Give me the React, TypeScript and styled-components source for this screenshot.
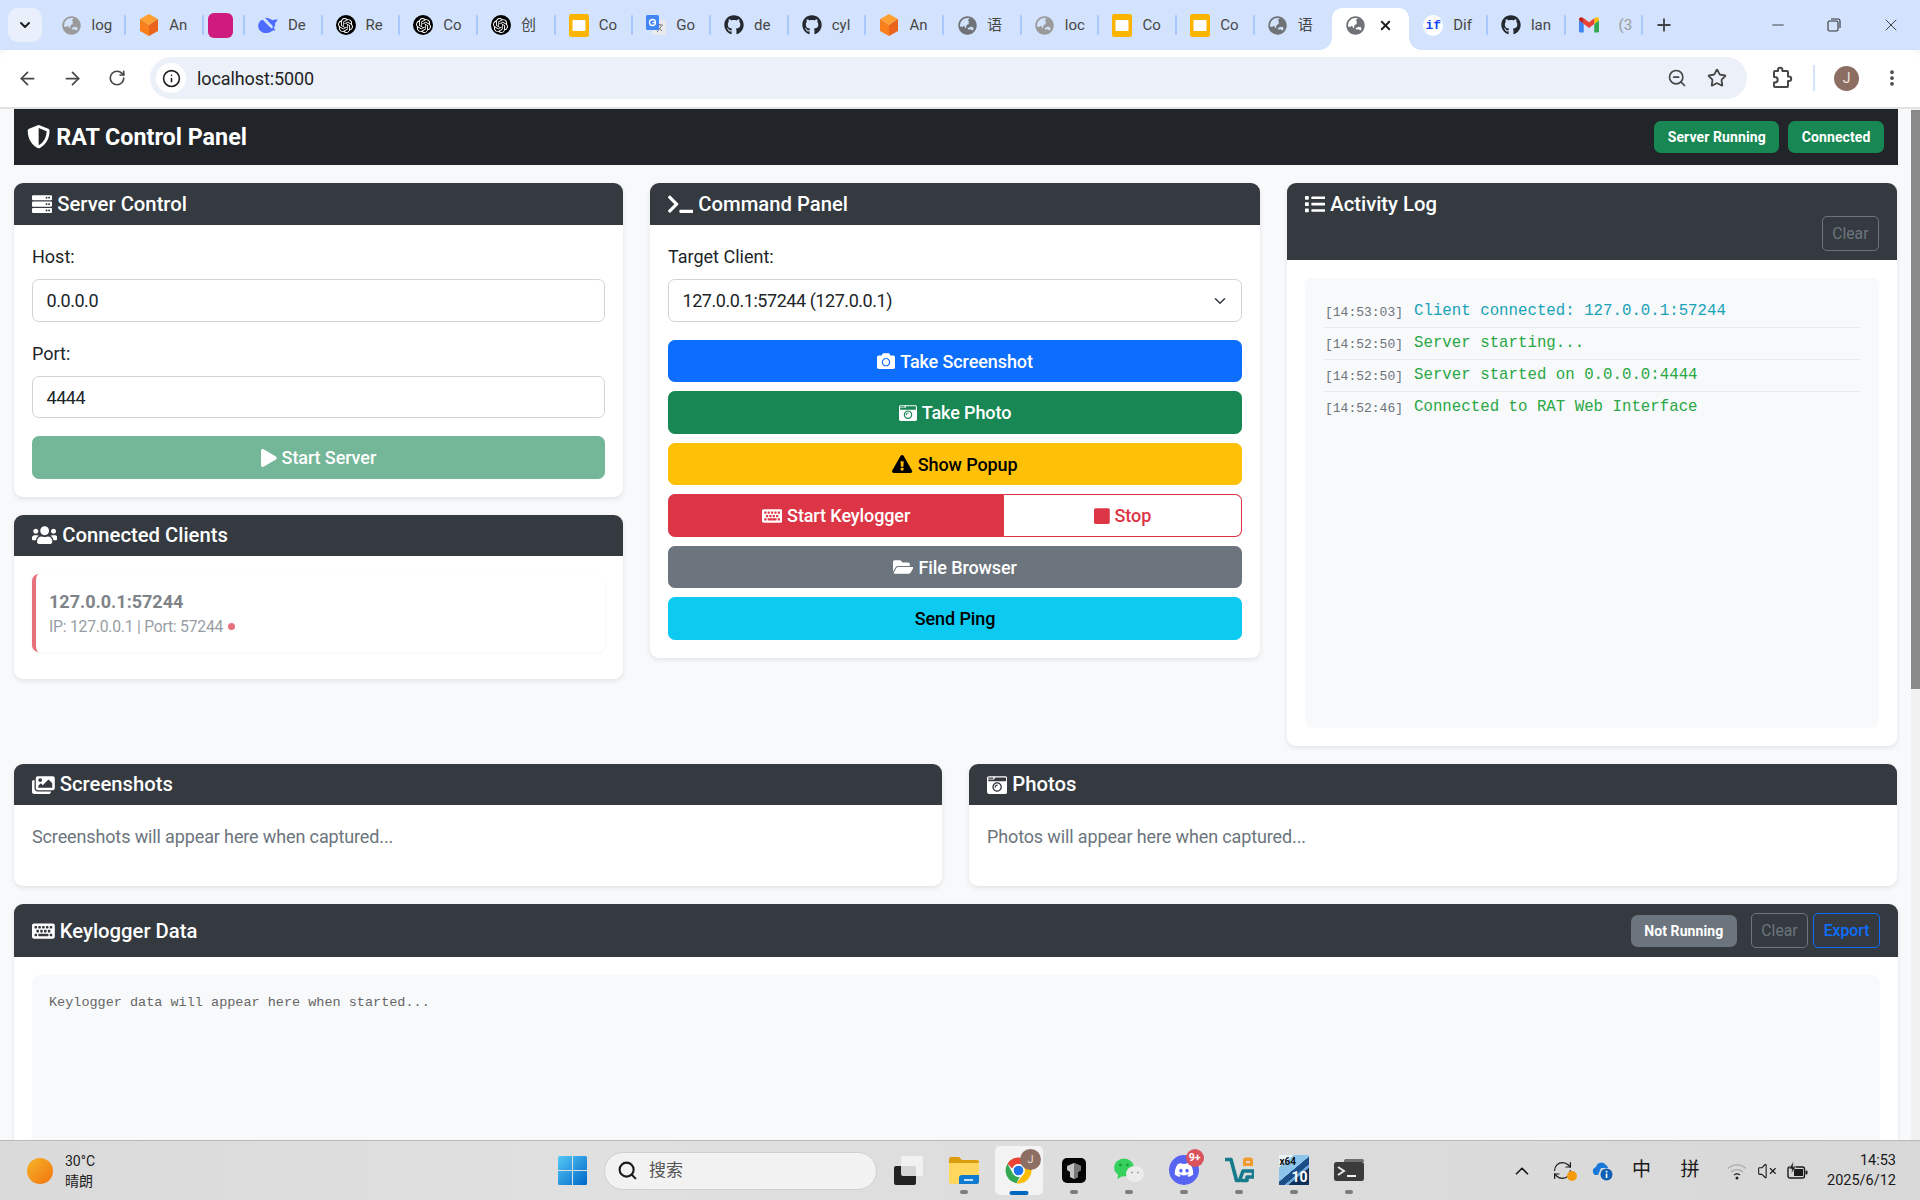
import React from 'react';
import styled, { createGlobalStyle } from 'styled-components';
import {
  FaServer, FaUsers, FaTerminal, FaList, FaImages, FaCameraRetro, FaCamera, FaExclamationTriangle,
  FaKeyboard, FaStop, FaFolderOpen, FaPlay, FaShieldAlt, FaGithub, FaGlobeAsia, FaDiscord,
} from 'react-icons/fa';
import { SiOpenai } from 'react-icons/si';
import {
  ArrowLeft, ArrowRight, RotateCw, ZoomOut, Star, EllipsisVertical, Info, Plus, X, Minus,
  ChevronDown, ChevronUp, Search, VolumeX, RefreshCw,
} from 'lucide-react';

const UI = `Roboto, "Noto Sans CJK SC", sans-serif`;
const MONO = `"Liberation Mono", monospace`;

const Global = createGlobalStyle`
  html, body { margin: 0; padding: 0; height: 100%; overflow: hidden; }
  body { font-family: ${UI}; font-size: 18px; line-height: 1.5; color: #212529; background: #f8f9fa; }
  * { box-sizing: border-box; }
`;

const Screen = styled.div`
  width: 1920px; height: 1200px; display: flex; flex-direction: column; overflow: hidden;
`;

/* Font Awesome glyphs keep their real proportions: 1em tall, width from the glyph's viewBox */
const UsersGlyph = styled(FaUsers)`width: 1.25em; height: 1em; flex: none;`;
const TerminalGlyph = styled(FaTerminal)`width: 1.25em; height: 1em; flex: none;`;
const ImagesGlyph = styled(FaImages)`width: 1.125em; height: 1em; flex: none;`;
const WarningGlyph = styled(FaExclamationTriangle)`width: 1.125em; height: 1em; flex: none;`;
const KeyboardGlyph = styled(FaKeyboard)`width: 1.125em; height: 1em; flex: none;`;
const FolderGlyph = styled(FaFolderOpen)`width: 1.125em; height: 1em; flex: none;`;
const PlayGlyph = styled(FaPlay)`width: .875em; height: 1em; flex: none;`;
const StopGlyph = styled(FaStop)`width: .875em; height: 1em; flex: none;`;

/* ---------- browser chrome ---------- */
const TabStrip = styled.div`
  height: 50px; flex: none; background: #d3e3fd; display: flex; align-items: flex-start; padding-left: 8px;
`;
const TabSearch = styled.div`
  width: 34px; height: 34px; margin-top: 8px; margin-right: 5.5px; border-radius: 10px; background: #e9f0fc;
  display: flex; align-items: center; justify-content: center; color: #1f1f1f; flex: none;
`;
const Tab = styled.div<{ $w?: number; $active?: boolean; $noSep?: boolean }>`
  position: relative; flex: none; width: ${p => p.$w ?? 77.7}px; height: ${p => (p.$active ? 42 : 34)}px; margin-top: 8px;
  display: flex; align-items: center; padding-left: ${p => (p.$w ? 8 : 14)}px; padding-bottom: ${p => (p.$active ? 8 : 0)}px;
  background: ${p => (p.$active ? '#fff' : 'transparent')};
  border-radius: 10px 10px 0 0;
  &::after {
    content: ''; position: absolute; right: -1px; top: 7px; width: 2px; height: 20px; border-radius: 1px;
    background: ${p => (p.$active || p.$noSep ? 'transparent' : '#a8c7fa')};
  }
  ${p => p.$active && `
    &::before {
      content: ''; position: absolute; left: -12px; right: -12px; bottom: 0; height: 12px; z-index: 0;
      background:
        radial-gradient(circle at 0 0, transparent 11.5px, #fff 12px) left bottom / 12px 12px no-repeat,
        radial-gradient(circle at 100% 0, transparent 11.5px, #fff 12px) right bottom / 12px 12px no-repeat;
    }
  `}
`;
const Favicon = styled.span<{ $c?: string }>`
  width: 20px; height: 20px; flex: none; display: flex; align-items: center; justify-content: center;
  color: ${p => p.$c ?? '#757575'}; font-size: 20px; position: relative; z-index: 1;
`;
const TabLabel = styled.span<{ $faint?: boolean }>`
  margin-left: ${p => (p.$faint ? 20 : 10)}px; white-space: nowrap; font-size: 15px; line-height: 20px;
  color: ${p => (p.$faint ? '#9a9a9a' : '#474747')}; flex: none;
`;
const TabClose = styled.span`
  margin-left: 12px; display: flex; color: #1f1f1f; position: relative; z-index: 1;
`;
const Swatch = styled.span`
  width: 25px; height: 25px; border-radius: 6px; background: #cf1b7f; flex: none; display: block;
`;
const OpenAiDisc = styled.span`
  width: 20px; height: 20px; border-radius: 50%; background: #000; color: #fff; display: flex; align-items: center; justify-content: center; font-size: 15px;
`;
const DifyDisc = styled.span`
  width: 21px; height: 21px; border-radius: 50%; background: #fff; color: #1346f2; font: 700 13px/21px ${MONO}; text-align: center; display: block;
`;
const NewTab = styled.div`
  margin-left: 8px; margin-top: 14px; width: 28px; height: 22px; display: flex; align-items: center; justify-content: center; color: #444;
`;
const WindowButtons = styled.div`
  margin-left: auto; display: flex; align-items: center; height: 50px; color: #333;
`;
const WinBtn = styled.span<{ $w: number }>`
  width: ${p => p.$w}px; display: flex; justify-content: center; align-items: center;
`;

const Toolbar = styled.div`
  height: 59px; flex: none; background: #fff; border-radius: 10px 10px 0 0; border-bottom: 2px solid #e3e3e3;
  display: flex; align-items: center; padding-left: 4.5px; padding-bottom: 1px;
`;
const ToolBtn = styled.span<{ $w?: number }>`
  width: ${p => p.$w ?? 45}px; height: 42px; flex: none; display: flex; align-items: center; justify-content: center; color: #474747;
`;
const Omnibox = styled.div`
  flex: none; width: 1597px; height: 42px; margin: 0 11px 0 10.5px; border-radius: 21px; background: #ebf0f9;
  display: flex; align-items: center; padding-left: 6px; padding-right: 10px;
`;
const SiteInfo = styled.span`
  width: 30px; height: 30px; border-radius: 50%; background: #fff; color: #1f1f1f; display: flex; align-items: center; justify-content: center; flex: none;
`;
const Url = styled.span`
  margin-left: 11px; font-size: 18px; color: #1f1f1f; flex: 1; letter-spacing: -0.1px;
`;
const ToolDivider = styled.span`
  width: 2px; height: 26px; margin: 0 9px 0 10px; background: #d3e3fd; flex: none;
`;
const Avatar = styled.span`
  width: 25px; height: 25px; border-radius: 50%; background: #8d6e63; color: #f0e5e0; font-size: 14px; display: flex; align-items: center; justify-content: center;
`;

/* ---------- page ---------- */
const Viewport = styled.div`
  flex: 1; min-height: 0; display: flex;
`;
const Page = styled.main`
  flex: 1; min-width: 0; padding: 0 13px 0 14px; overflow: hidden; background: #f8f9fa;
`;
const Scrollbar = styled.div`
  width: 9px; flex: none; background: #f1f1f1;
`;
const ScrollThumb = styled.div`
  height: 579px; margin-top: 1px; background: #8a8a8a;
`;
const Navbar = styled.header`
  height: 56px; background: #212529; display: flex; align-items: center; justify-content: space-between; padding: 0 14px 0 13px; margin-bottom: 18px;
`;
const Brand = styled.h1`
  margin: 0; font-size: 23.3px; line-height: 27px; font-weight: 700; color: #fff; display: flex; align-items: center; gap: 6px;
`;
const Badges = styled.div`
  display: flex; gap: 9px;
`;
const Badge = styled.span<{ $bg: string }>`
  height: 32px; padding: 0 13.5px; border-radius: 6.75px; background: ${p => p.$bg}; color: #fff; font-size: 14px; font-weight: 700; line-height: 32px; white-space: nowrap; letter-spacing: .1px;
`;
const TopRow = styled.div`
  display: grid; grid-template-columns: 609px 610px 610px; column-gap: 27px; margin-bottom: 17.7px; align-items: start;
`;
const Column = styled.div`
  display: flex; flex-direction: column; gap: 18px;
`;
const MidRow = styled.div`
  display: grid; grid-template-columns: 928px 928px; column-gap: 27px; margin-bottom: 18px;
`;
const Card = styled.section`
  background: #fff; border-radius: 9px; box-shadow: 0 2px 5px rgba(0,0,0,.09); overflow: hidden;
`;
const CardHeader = styled.div<{ $stack?: boolean; $slim?: boolean }>`
  background: #343a40; color: #fff; padding: ${p => (p.$slim ? 8.5 : 9)}px 18px;
  display: flex; flex-direction: ${p => (p.$stack ? 'column' : 'row')}; align-items: ${p => (p.$stack ? 'stretch' : 'center')};
  justify-content: space-between;
`;
const CardTitle = styled.h5`
  margin: 0; font-size: 20.25px; line-height: 24.3px; font-weight: 500; display: flex; align-items: center; gap: 5px; color: #fff;
`;
const CardBody = styled.div`
  padding: 18px;
`;
const FieldLabel = styled.label`
  display: block; margin-bottom: 9px; line-height: 27px;
`;
const Field = styled.div`
  margin-bottom: 18px;
`;
const TextInput = styled.div`
  height: 42.5px; border: 1px solid #ced4da; border-radius: 6.75px; padding: 0 13.5px; display: flex; align-items: center; justify-content: space-between; color: #212529; background: #fff; line-height: 27px; letter-spacing: -0.45px;
`;
const SelectArrow = styled.span`
  display: flex; margin-right: -1px; color: #343a40;
`;
const Btn = styled.div<{ $bg: string; $fg?: string; $dim?: boolean; $border?: string }>`
  height: 42.5px; flex: 1 1 auto; border-radius: 6.75px; display: flex; align-items: center; justify-content: center; gap: 5px;
  background: ${p => p.$bg}; color: ${p => p.$fg ?? '#fff'}; opacity: ${p => (p.$dim ? 0.6 : 1)};
  border: 1px solid ${p => p.$border ?? p.$bg}; font-weight: 500; white-space: nowrap; letter-spacing: -0.1px;
`;
const ButtonStack = styled.div`
  display: flex; flex-direction: column; gap: 9px;
`;
const SplitGroup = styled.div`
  display: flex;
`;
const SplitLeft = styled(Btn)`
  flex: 0 0 336px; border-radius: 6.75px 0 0 6.75px;
`;
const SplitRight = styled(Btn)`
  flex: 1; border-radius: 0 6.75px 6.75px 0; border-left: 0;
`;
const ClientCard = styled.div`
  height: 78px; margin-bottom: 9px; background: #fff; border-left: 4.5px solid #dc3545; border-radius: 6.75px; padding: 13.5px 13px;
  box-shadow: 0 1px 3px rgba(0,0,0,.06); opacity: .7;
`;
const ClientName = styled.div`
  font-weight: 700; line-height: 27px; color: #495057;
`;
const ClientMeta = styled.div`
  font-size: 15.75px; line-height: 24px; color: #6c757d; display: flex; align-items: center; gap: 5px; letter-spacing: -0.25px;
`;
const Dot = styled.span`
  width: 7px; height: 7px; border-radius: 50%; background: #dc3545; display: block;
`;
const SmallBtn = styled.span<{ $c: string; $self?: boolean; $bold?: boolean }>`
  height: 35px; padding: 0 9.5px; border: 1px solid ${p => p.$c}; color: ${p => p.$c}; border-radius: 5px; font-size: 15.75px; line-height: 33px;
  font-weight: ${p => (p.$bold ? 500 : 400)}; align-self: ${p => (p.$self ? 'flex-end' : 'auto')}; white-space: nowrap;
`;
const HeaderTools = styled.div`
  display: flex; align-items: center; gap: 5px;
`;
const BadgeGap = styled.span`
  margin-right: 9px; display: flex;
`;
const LogBox = styled.div`
  height: 450px; background: #f8f9fa; border-radius: 6.75px; padding: 18px;
`;
const LogRow = styled.div<{ $last?: boolean }>`
  height: 32px; padding-top: 1px; border-bottom: 1px solid ${p => (p.$last ? 'transparent' : '#e9ecef')}; display: flex; align-items: center; font-family: ${MONO}; font-size: 15.75px; white-space: pre;
`;
const LogTime = styled.span`
  font-size: 13px; color: #6c757d; margin: 0 11px 0 2px;
`;
const LogText = styled.span<{ $c: string }>`
  color: ${p => p.$c};
`;
const Placeholder = styled.p`
  margin: 0 0 18px; color: #6c757d; line-height: 27px; letter-spacing: -0.13px;
`;
const KeyBox = styled.div`
  height: 400px; background: #f8f9fa; border-radius: 6.75px; padding: 18px 17px; font-family: ${MONO}; font-size: 13.5px; line-height: 20px; color: #666;
`;

/* ---------- taskbar ---------- */
const Taskbar = styled.footer`
  height: 60px; flex: none; background: linear-gradient(90deg, #dadada, #e0e0e0 30%, #d8d8d8); border-top: 1px solid #b9b9b9;
  display: grid; grid-template-columns: 545px auto 1fr; align-items: center; color: #1a1a1a;
`;
const Weather = styled.div`
  display: flex; align-items: center; gap: 12px; padding-left: 27px;
`;
const Sun = styled.span`
  width: 26px; height: 26px; border-radius: 50%; background: linear-gradient(135deg, #f5b52a, #f2740d); display: block;
`;
const WeatherText = styled.div`
  font-size: 14px; line-height: 20px; color: #222;
`;
const Dock = styled.div`
  display: flex; align-items: center; height: 100%;
`;
const Slot = styled.div<{ $open?: boolean; $active?: boolean }>`
  position: relative; width: 55px; height: 100%; display: flex; align-items: center; justify-content: center; padding-bottom: 1px;
  &::before {
    content: ''; position: absolute; left: 3.5px; right: 3.5px; top: 5px; bottom: 5px; border-radius: 5px;
    background: ${p => (p.$active ? '#f3f3f3' : 'transparent')};
  }
  &::after {
    content: ''; position: absolute; bottom: ${p => (p.$active ? '5px' : '6px')}; left: 50%; transform: translateX(-50%);
    width: ${p => (p.$active ? '19px' : '8px')}; height: 4px; border-radius: 2px;
    background: ${p => (p.$active ? '#0067c0' : p.$open ? '#7d7d7d' : 'transparent')};
  }
  & > * { position: relative; z-index: 1; }
`;
const SearchBox = styled.div`
  width: 273px; height: 38px; margin: 0 4px; border-radius: 19px; background: #f2f2f2; border: 1px solid #cfcfcf;
  display: flex; align-items: center; gap: 11px; padding-left: 12px; color: #1a1a1a; font-size: 16px;
`;
const SearchHint = styled.span`
  color: #555; font-size: 17px;
`;
const AppGlyph = styled.span`
  position: relative; display: block; line-height: 0;
`;
const CountBadge = styled.span`
  position: absolute; top: -6px; right: -5px; width: 18px; height: 18px; border-radius: 50%; background: #d9525c; color: #fff;
  font-size: 10.5px; line-height: 18px; text-align: center; font-weight: 700;
`;
const ChromeAvatar = styled.span`
  position: absolute; top: -6px; right: -7px; width: 21px; height: 21px; border-radius: 50%; background: #8d6e63; color: #e8dcd6;
  font-size: 11px; line-height: 21px; text-align: center;
`;
const DebugTile = styled.span`
  display: block; width: 30px; height: 30px; position: relative; line-height: 1;
  background: linear-gradient(140deg, #e8f4fc 0 22%, #8cc4ea 23% 48%, #1c4d86 49% 62%, #6fa9d8 63% 68%, #0f2f5c 69% 100%);
`;
const DebugTop = styled.span`
  position: absolute; left: 1px; top: 1px; color: #111; font: 700 10px/11px ${UI};
`;
const DebugNum = styled.span`
  position: absolute; right: 1px; bottom: 0; color: #fff; font: 700 14px/15px ${UI};
`;
const Tray = styled.div`
  display: flex; align-items: center; justify-content: flex-end; padding-right: 24px; height: 100%;
`;
const TraySlot = styled.span<{ $w: number }>`
  width: ${p => p.$w}px; display: flex; align-items: center; justify-content: center; font-size: 19px; color: #1a1a1a; flex: none;
`;
const Clock = styled.div`
  width: 82px; text-align: right; font-size: 14.5px; line-height: 20px; color: #1a1a1a; flex: none;
`;

/* ---------- drawn icons ---------- */
const ExtensionIcon = () => (
  <svg width="24" height="24" viewBox="0 0 24 24" fill="none" stroke="#474747" strokeWidth="2" strokeLinejoin="round"><path d="M9 5V4a2.200 2.200 0 0 1 4.400 0v1H18a1 1 0 0 1 1 1v4.500h1a2.200 2.200 0 0 1 0 4.400h-1V20a1 1 0 0 1-1 1H6a1 1 0 0 1-1-1v-3.500h1a2.700 2.700 0 0 0 0-5.400H5V6a1 1 0 0 1 1-1Z" /></svg>
);
const CubeIcon = () => (
  <svg width="20" height="22" viewBox="0 0 20 22"><path d="M10 0 19 5 10 11 1 5Z" fill="#ffa033" /><path d="M1 5 10 11V22L1 17Z" fill="#f77f1c" /><path d="M19 5 10 11V22L19 17Z" fill="#e9641a" /></svg>
);
const SlidesIcon = () => (
  <svg width="20" height="23" viewBox="0 0 20 23"><rect width="20" height="23" rx="2.500" fill="#fbb400" /><rect x="3.500" y="6" width="13" height="11" rx="1" fill="#fff" /></svg>
);
const WhaleIcon = () => (
  <svg width="21" height="17" viewBox="0 0 21 17" fill="#4d6bfe"><path d="M20.500 2c-.8-.4-1.200.4-1.700.7-.4-.5-.9-.7-1.500-.6-.7 0-1.300.3-1.800.9-.5-.2-1-.6-1.600-.9C12 1.300 9.500.3 7.500.500 10 3 12 5 14.500 8c1 1.200 1.800 2.500-.1 3.700C11 9 8 5.500 5 2.500 2 3 .1 6.500.300 9.500c.3 4 3.700 7 8.200 7 2.500 0 4.700-.7 6.500-2.500 1-.1 2.500-.1 3.300-1.100.2-.4-.2-.7-.7-.6-.3 0-1 .1-1.300.1.800-1.300 2.200-4.200 1.600-6.400.9-.6 2.300-2 2.600-3.500Z" /></svg>
);
const TranslateIcon = () => (
  <svg width="20" height="21" viewBox="0 0 20 21"><rect x="6" y="5" width="14" height="15" rx="1.500" fill="#e8eaed" /><path d="M10 10h7M13.500 9v1M11 17l4.500-6M12 12l4 4" stroke="#777" fill="none" /><rect width="13" height="15" rx="1.500" fill="#4285f4" /><circle cx="6.500" cy="7.500" r="3" fill="none" stroke="#fff" strokeWidth="1.300" /><rect x="6.500" y="7" width="3" height="1.200" fill="#fff" /></svg>
);
const GmailIcon = () => (
  <svg width="21" height="16" viewBox="0 0 21 16"><path d="M0 3V14.500A1.500 1.500 0 0 0 1.500 16H5V7Z" fill="#4285f4" /><path d="M16 16h3.500A1.500 1.500 0 0 0 21 14.500V3l-5 4Z" fill="#34a853" /><path d="M16 7V1l2-1c1.500-.6 3 .5 3 2v1Z" fill="#fbbc04" /><path d="M5 7V1l5.500 4.200L16 1v6l-5.500 4.200Z" fill="#ea4335" /><path d="M0 3V2C0 .5 1.500-.6 3 0l2 1v6Z" fill="#c5221f" /></svg>
);
const WindowsLogo = () => (
  <svg width="29" height="29" viewBox="0 0 29 29"><defs><linearGradient id="wl" x1="0" y1="0" x2="1" y2="1"><stop offset="0" stopColor="#55c8f7" /><stop offset="1" stopColor="#0067c8" /></linearGradient></defs><path d="M0 1.500A1.500 1.500 0 0 1 1.500 0H14v14H0ZM15 0h12.500A1.500 1.500 0 0 1 29 1.500V14H15ZM0 15h14v14H1.500A1.500 1.500 0 0 1 0 27.500ZM15 15h14v12.500a1.500 1.500 0 0 1-1.500 1.500H15Z" fill="url(#wl)" /></svg>
);
const TaskViewIcon = () => (
  <svg width="29" height="29" viewBox="0 0 29 29"><rect x="0" y="10" width="22" height="19" rx="2" fill="#222" /><rect x="7" y="0" width="22" height="20" rx="2" fill="#f4f4f4" fillOpacity=".85" /></svg>
);
const ExplorerIcon = () => (
  <svg width="30" height="28" viewBox="0 0 30 28"><path d="M0 3a2 2 0 0 1 2-2h8l3 3h15a2 2 0 0 1 2 2v4H0Z" fill="#dc9c10" /><path d="M0 7h30v19a2 2 0 0 1-2 2H2a2 2 0 0 1-2-2Z" fill="#ffd75e" /><path d="M10 22a3 3 0 0 1 3-3h17v7a2 2 0 0 1-2 2H10Z" fill="#0f7bd0" /><rect x="15" y="23" width="9" height="2" fill="#bfe3ff" /></svg>
);
const ChromeIcon = () => (
  <svg width="31" height="31" viewBox="0 0 48 48"><path d="M24 4a20 20 0 0 1 17.300 10H24a10 10 0 0 0-9.500 7L6.900 13.700A20 20 0 0 1 24 4Z" fill="#ea4335" /><path d="M6.900 13.700 15.500 29A10 10 0 0 0 26 33.800L21 43.800A20 20 0 0 1 6.900 13.700Z" fill="#34a853" /><path d="M41.300 14A20 20 0 0 1 21 43.800L30.500 31.500A10 10 0 0 0 31 17Z" fill="#fbbc04" /><circle cx="24" cy="24" r="8.500" fill="#1a73e8" stroke="#fff" strokeWidth="2" /></svg>
);
const BlackAppIcon = () => (
  <svg width="24" height="25" viewBox="0 0 24 25"><rect width="24" height="25" rx="5" fill="#050505" /><path d="M5 8 12 5l7 3v4l-3 2v5l-4 2-4-2v-5l-3-2Z" fill="#c4c4c4" /><path d="M12 5l7 3v4l-3 2v5l-4 2Z" fill="#777" /></svg>
);
const WeChatIcon = () => (
  <svg width="30" height="24" viewBox="0 0 30 24"><ellipse cx="10" cy="9.500" rx="10" ry="9" fill="#36d15c" /><path d="M4 15 3.500 21l6-3.500Z" fill="#36d15c" /><circle cx="6.500" cy="7" r="1.400" fill="#1a9c3f" /><circle cx="13.500" cy="7" r="1.400" fill="#1a9c3f" /><ellipse cx="21" cy="16" rx="9" ry="8" fill="#ececec" /><circle cx="18" cy="14.500" r="1.100" fill="#aaa" /><circle cx="24" cy="14.500" r="1.100" fill="#aaa" /></svg>
);
const DiscordDisc = styled.span`
  width: 30px; height: 30px; border-radius: 50%; background: #5865f2; color: #fff; display: flex; align-items: center; justify-content: center; font-size: 20px; line-height: 0;
`;
const VsIcon = () => (
  <svg width="30" height="26" viewBox="0 0 30 26" fill="none"><path d="M1 2.500H7L12.500 23.500H15.500L19 14H29.500V20H23V23.500H17" stroke="#157a8c" strokeWidth="3.600" strokeLinejoin="round" /><path d="M19 9V3.500A3 3 0 0 1 22 .5h4a3 3 0 0 1 3 3V9Z" fill="#f29a2e" /><rect x="22" y="4" width="4" height="2" fill="#d9d9d9" /></svg>
);
const TerminalIcon = () => (
  <svg width="30" height="22" viewBox="0 0 30 22"><rect y="3" width="30" height="19" rx="2.500" fill="#3b3b3b" /><path d="M10 3V2a2 2 0 0 1 2-2h16a2 2 0 0 1 2 2v1Z" fill="#6e6e6e" /><path d="M4 8l6 4-6 4" stroke="#e8e8e8" strokeWidth="2" fill="none" /><rect x="13" y="16" width="9" height="2" fill="#f2f2f2" /></svg>
);
const OneDriveIcon = () => (
  <svg width="21" height="20" viewBox="0 0 21 20"><path d="M1 11a4 4 0 0 1 3-5 5.500 5.500 0 0 1 10-2 4 4 0 0 1 2 3H9l-3 7H3a3.500 3.500 0 0 1-2-3Z" fill="#1a79d8" /><circle cx="14.500" cy="13.500" r="6" fill="#0f5fb5" /><rect x="13.700" y="12.500" width="1.700" height="4.500" fill="#fff" /><rect x="13.700" y="9.800" width="1.700" height="1.700" fill="#fff" /></svg>
);
const WifiGlyph = () => (
  <svg width="20" height="18" viewBox="0 0 20 18" fill="none"><path d="M1 6.500a13 13 0 0 1 18 0" stroke="#aaa" strokeWidth="1.200" /><path d="M4 10a9 9 0 0 1 12 0" stroke="#aaa" strokeWidth="1.200" /><path d="M7 13a4.500 4.500 0 0 1 6 0" stroke="#333" strokeWidth="1.400" /><circle cx="10" cy="16" r="1.500" fill="#222" /></svg>
);
const BatteryGlyph = () => (
  <svg width="21" height="20" viewBox="0 0 21 20" fill="none"><rect x="1" y="6" width="16.500" height="11" rx="2" stroke="#1a1a1a" strokeWidth="1.400" /><rect x="7" y="8" width="9" height="7" fill="#1a1a1a" /><rect x="18.500" y="9.500" width="2" height="4" rx="1" fill="#1a1a1a" /><path d="M6.500 0 2 8h3L4 13l5-7H6Z" fill="#1a1a1a" stroke="#ddd" strokeWidth=".6" /></svg>
);
const SyncMark = styled.span`
  position: relative; display: flex;
  &::after { content: ''; position: absolute; right: -4px; bottom: 0; width: 10px; height: 10px; border-radius: 50%; background: #f59a0c; }
`;

const Globe = () => <FaGlobeAsia size={19} />;
const Ai = () => <OpenAiDisc><SiOpenai /></OpenAiDisc>;

const tabs: { icon: React.ReactNode; label: string; c?: string }[] = [
  { icon: <Globe />, label: 'log', c: '#9a9a9a' },
  { icon: <CubeIcon />, label: 'An' },
  { icon: <Swatch />, label: '' },
  { icon: <WhaleIcon />, label: 'De' },
  { icon: <Ai />, label: 'Re' },
  { icon: <Ai />, label: 'Co' },
  { icon: <Ai />, label: '创' },
  { icon: <SlidesIcon />, label: 'Co' },
  { icon: <TranslateIcon />, label: 'Go' },
  { icon: <FaGithub />, label: 'de', c: '#24292f' },
  { icon: <FaGithub />, label: 'cyl', c: '#24292f' },
  { icon: <CubeIcon />, label: 'An' },
  { icon: <Globe />, label: '语', c: '#6f7378' },
  { icon: <Globe />, label: 'loc', c: '#9a9a9a' },
  { icon: <SlidesIcon />, label: 'Co' },
  { icon: <SlidesIcon />, label: 'Co' },
  { icon: <Globe />, label: '语', c: '#6f7378' },
];

const App: React.FC = () => (
  <>
    <Global />
    <Screen>
      <TabStrip>
        <TabSearch><ChevronDown size={16} strokeWidth={3} /></TabSearch>
        {tabs.map((t, i) => (
          <Tab key={i} $w={t.label ? undefined : 41} $noSep={i === 16}>
            <Favicon $c={t.c}>{t.icon}</Favicon>
            {t.label && <TabLabel>{t.label}</TabLabel>}
          </Tab>
        ))}
        <Tab $active>
          <Favicon $c="#6f7378"><Globe /></Favicon>
          <TabClose><X size={15} strokeWidth={3} /></TabClose>
        </Tab>
        <Tab><Favicon><DifyDisc>if</DifyDisc></Favicon><TabLabel>Dif</TabLabel></Tab>
        <Tab><Favicon $c="#24292f"><FaGithub /></Favicon><TabLabel>lan</TabLabel></Tab>
        <Tab><Favicon><GmailIcon /></Favicon><TabLabel $faint>(3</TabLabel></Tab>
        <NewTab><Plus size={20} strokeWidth={2.2} /></NewTab>
        <WindowButtons>
          <WinBtn $w={56}><Minus size={18} strokeWidth={1.2} /></WinBtn>
          <WinBtn $w={56}>
            <svg width="14" height="14" viewBox="0 0 14 14" fill="none" stroke="#333" strokeWidth="1.100"><rect x="1" y="3" width="10" height="10" rx="1.500" /><path d="M4 1h7a2 2 0 0 1 2 2v7" /></svg>
          </WinBtn>
          <WinBtn $w={58}><X size={20} strokeWidth={1.100} /></WinBtn>
        </WindowButtons>
      </TabStrip>
      <Toolbar>
        <ToolBtn><ArrowLeft size={21} /></ToolBtn>
        <ToolBtn><ArrowRight size={21} /></ToolBtn>
        <ToolBtn><RotateCw size={18} strokeWidth={2.2} /></ToolBtn>
        <Omnibox>
          <SiteInfo><Info size={19} /></SiteInfo>
          <Url>localhost:5000</Url>
          <ToolBtn $w={40}><ZoomOut size={20} /></ToolBtn>
          <ToolBtn $w={40}><Star size={20} strokeWidth={2.2} /></ToolBtn>
        </Omnibox>
        <ToolBtn><ExtensionIcon /></ToolBtn>
        <ToolDivider />
        <ToolBtn><Avatar>J</Avatar></ToolBtn>
        <ToolBtn><EllipsisVertical size={20} strokeWidth={2.5} /></ToolBtn>
      </Toolbar>

      <Viewport>
        <Page>
          <Navbar>
            <Brand><FaShieldAlt />RAT Control Panel</Brand>
            <Badges>
              <Badge $bg="#198754">Server Running</Badge>
              <Badge $bg="#198754">Connected</Badge>
            </Badges>
          </Navbar>

          <TopRow>
            <Column>
              <Card>
                <CardHeader><CardTitle><FaServer />Server Control</CardTitle></CardHeader>
                <CardBody>
                  <Field><FieldLabel>Host:</FieldLabel><TextInput>0.0.0.0</TextInput></Field>
                  <Field><FieldLabel>Port:</FieldLabel><TextInput>4444</TextInput></Field>
                  <Btn $bg="#198754" $dim><PlayGlyph />Start Server</Btn>
                </CardBody>
              </Card>
              <Card>
                <CardHeader $slim><CardTitle><UsersGlyph />Connected Clients</CardTitle></CardHeader>
                <CardBody>
                  <ClientCard>
                    <ClientName>127.0.0.1:57244</ClientName>
                    <ClientMeta>IP: 127.0.0.1 | Port: 57244 <Dot /></ClientMeta>
                  </ClientCard>
                </CardBody>
              </Card>
            </Column>

            <Card>
              <CardHeader><CardTitle><TerminalGlyph />Command Panel</CardTitle></CardHeader>
              <CardBody>
                <Field>
                  <FieldLabel>Target Client:</FieldLabel>
                  <TextInput>127.0.0.1:57244 (127.0.0.1)<SelectArrow><ChevronDown size={18} strokeWidth={2} /></SelectArrow></TextInput>
                </Field>
                <ButtonStack>
                  <Btn $bg="#0d6efd"><FaCamera />Take Screenshot</Btn>
                  <Btn $bg="#198754"><FaCameraRetro />Take Photo</Btn>
                  <Btn $bg="#ffc107" $fg="#000"><WarningGlyph />Show Popup</Btn>
                  <SplitGroup>
                    <SplitLeft $bg="#dc3545"><KeyboardGlyph />Start Keylogger</SplitLeft>
                    <SplitRight $bg="#fff" $fg="#dc3545" $border="#dc3545"><StopGlyph />Stop</SplitRight>
                  </SplitGroup>
                  <Btn $bg="#6c757d"><FolderGlyph />File Browser</Btn>
                  <Btn $bg="#0dcaf0" $fg="#000">Send Ping</Btn>
                </ButtonStack>
              </CardBody>
            </Card>

            <Card>
              <CardHeader $stack>
                <CardTitle><FaList />Activity Log</CardTitle>
                <SmallBtn $c="#6c757d" $self>Clear</SmallBtn>
              </CardHeader>
              <CardBody>
                <LogBox>
                  <LogRow><LogTime>[14:53:03]</LogTime><LogText $c="#17a2b8">Client connected: 127.0.0.1:57244</LogText></LogRow>
                  <LogRow><LogTime>[14:52:50]</LogTime><LogText $c="#28a745">Server starting...</LogText></LogRow>
                  <LogRow><LogTime>[14:52:50]</LogTime><LogText $c="#28a745">Server started on 0.0.0.0:4444</LogText></LogRow>
                  <LogRow $last><LogTime>[14:52:46]</LogTime><LogText $c="#28a745">Connected to RAT Web Interface</LogText></LogRow>
                </LogBox>
              </CardBody>
            </Card>
          </TopRow>

          <MidRow>
            <Card>
              <CardHeader $slim><CardTitle><ImagesGlyph />Screenshots</CardTitle></CardHeader>
              <CardBody><Placeholder>Screenshots will appear here when captured...</Placeholder></CardBody>
            </Card>
            <Card>
              <CardHeader $slim><CardTitle><FaCameraRetro />Photos</CardTitle></CardHeader>
              <CardBody><Placeholder>Photos will appear here when captured...</Placeholder></CardBody>
            </Card>
          </MidRow>

          <Card>
            <CardHeader>
              <CardTitle><KeyboardGlyph />Keylogger Data</CardTitle>
              <HeaderTools>
                <BadgeGap><Badge $bg="#6c757d">Not Running</Badge></BadgeGap>
                <SmallBtn $c="#6c757d">Clear</SmallBtn>
                <SmallBtn $c="#0d6efd" $bold>Export</SmallBtn>
              </HeaderTools>
            </CardHeader>
            <CardBody><KeyBox>Keylogger data will appear here when started...</KeyBox></CardBody>
          </Card>
        </Page>
        <Scrollbar><ScrollThumb /></Scrollbar>
      </Viewport>

      <Taskbar>
        <Weather>
          <Sun />
          <WeatherText>30°C<br />晴朗</WeatherText>
        </Weather>
        <Dock>
          <Slot><WindowsLogo /></Slot>
          <SearchBox><Search size={21} strokeWidth={2.4} /><SearchHint>搜索</SearchHint></SearchBox>
          <Slot><TaskViewIcon /></Slot>
          <Slot $open><ExplorerIcon /></Slot>
          <Slot $active><AppGlyph><ChromeIcon /><ChromeAvatar>J</ChromeAvatar></AppGlyph></Slot>
          <Slot $open><BlackAppIcon /></Slot>
          <Slot $open><WeChatIcon /></Slot>
          <Slot $open><AppGlyph><DiscordDisc><FaDiscord /></DiscordDisc><CountBadge>9+</CountBadge></AppGlyph></Slot>
          <Slot $open><VsIcon /></Slot>
          <Slot $open><DebugTile><DebugTop>x64</DebugTop><DebugNum>10</DebugNum></DebugTile></Slot>
          <Slot $open><TerminalIcon /></Slot>
        </Dock>
        <Tray>
          <TraySlot $w={44}><ChevronUp size={22} strokeWidth={1.8} /></TraySlot>
          <TraySlot $w={36}><SyncMark><RefreshCw size={21} strokeWidth={1.4} /></SyncMark></TraySlot>
          <TraySlot $w={44}><OneDriveIcon /></TraySlot>
          <TraySlot $w={35}>中</TraySlot>
          <TraySlot $w={62}>拼</TraySlot>
          <TraySlot $w={32}><WifiGlyph /></TraySlot>
          <TraySlot $w={27}><VolumeX size={20} strokeWidth={1.3} /></TraySlot>
          <TraySlot $w={34}><BatteryGlyph /></TraySlot>
          <Clock>14:53<br />2025/6/12</Clock>
        </Tray>
      </Taskbar>
    </Screen>
  </>
);

export default App;
